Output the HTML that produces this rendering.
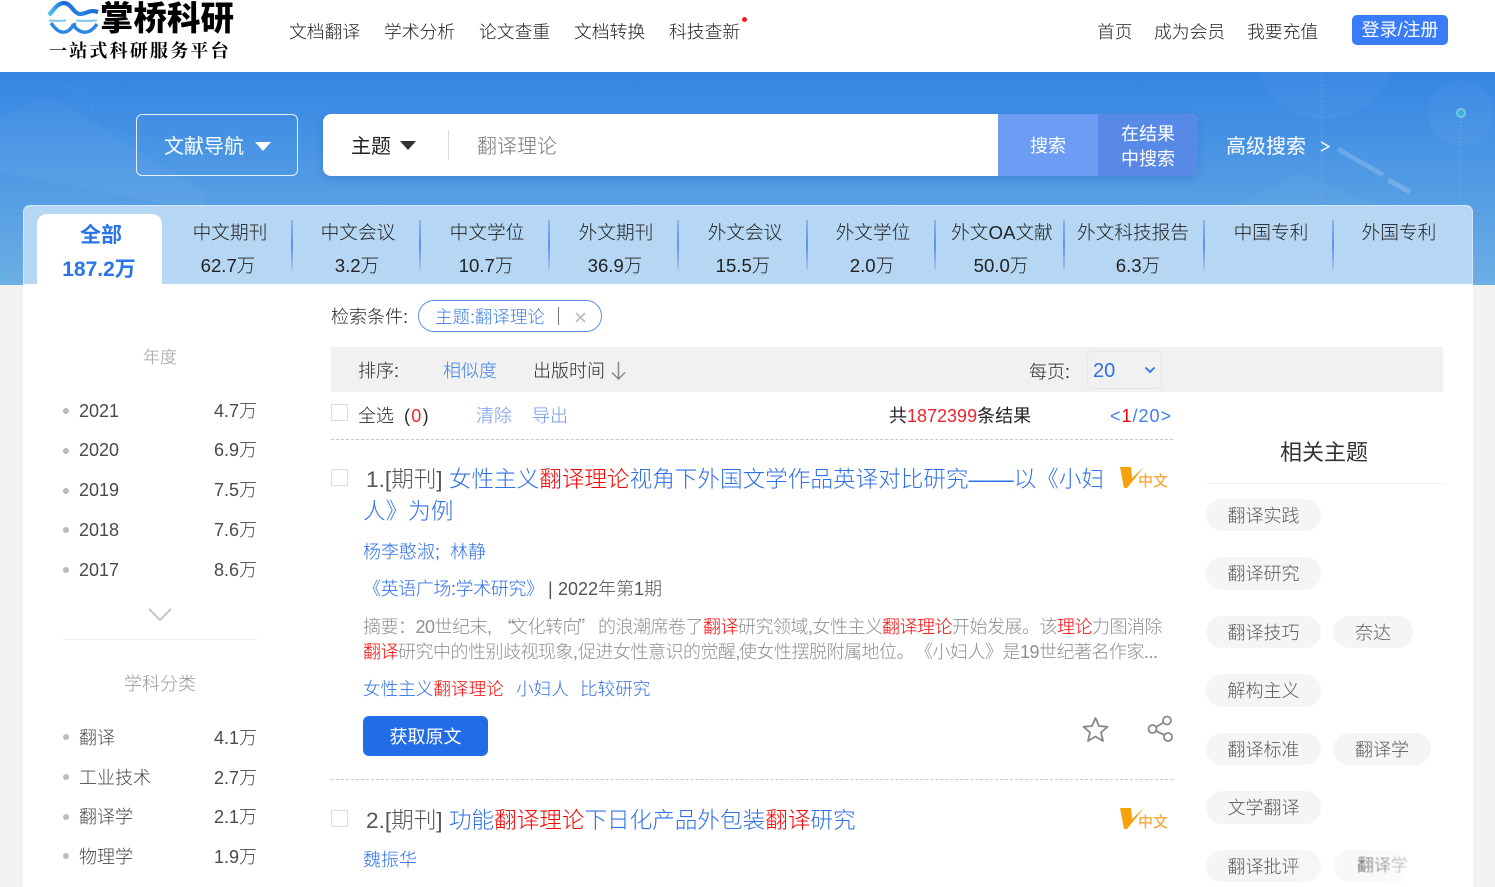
<!DOCTYPE html>
<html lang="zh"><head><meta charset="utf-8"><title>掌桥科研</title>
<style>
*{box-sizing:border-box;margin:0;padding:0}
html,body{width:1495px;height:887px;overflow:hidden;background:#f2f2f2}
body{position:relative;font-family:"Liberation Sans","Noto Sans CJK SC",sans-serif;color:#2a2a2a;font-weight:300}
.a{position:absolute}
.t{position:absolute;white-space:nowrap;line-height:1.3}
.c{transform:translateX(-50%)}
.r{color:#f00}.b{color:#2f6fe8}
.tag{position:absolute;height:32px;border-radius:16px;background:#f5f5f5;color:#5a5a5a;font-size:18px;line-height:34px;text-align:center}
.dot{position:absolute;left:63px;width:6px;height:6px;border-radius:50%;background:#bbb}
.sep{position:absolute;top:220px;width:2px;height:50px;background:linear-gradient(#8fb3f0,#5e8ff0 50%,#a6c4f0)}
.cb{position:absolute;left:331px;width:17px;height:17px;border:1px solid #ddd;background:#fff}
.tb{font-size:18.7px;top:221px;color:#222}.tn{font-size:18.6px;top:254px;color:#222}
.ab{position:absolute;white-space:nowrap;font-size:18px;line-height:25px;color:#8f8f8f;letter-spacing:-.5px}
.kw{font-size:17.6px;top:678px;color:#2f6fe8}
.nv{font-size:17.8px;top:21px;color:#222}
.s{font-size:18px;color:#4a4a4a}
</style></head><body>
<div class="a" style="left:0;top:0;width:1495px;height:72px;background:#fff"></div>
<svg class="a" style="left:46px;top:0" width="54" height="36" viewBox="0 0 54 36" fill="none">
<defs><linearGradient id="g1" x1="0" x2="1" y1="0" y2="0"><stop offset="0" stop-color="#4cc6ee"/><stop offset=".3" stop-color="#1668d8"/><stop offset=".65" stop-color="#2a86e0"/><stop offset="1" stop-color="#1668d8"/></linearGradient></defs>
<path d="M3 15C8 9 12 3 18 3C25 3 28 14 34 14C41 14 43 9 52 12" stroke="url(#g1)" stroke-width="4.200"/>
<path d="M3 20.500C10 21 14 21 20 20.500M30 20.500C38 21 44 21 51 20.500" stroke="#7cc6ee" stroke-width="2"/>
<path d="M5 23C10 30 14 33 19 32C25 31 26 25 30 24" stroke="#2e86e4" stroke-width="3.400"/>
<path d="M26 24C31 30 35 33 41 32C46 31 49 27 51 24" stroke="#2e86e4" stroke-width="3.400"/>
</svg>
<span class="t" style="left:100px;top:-2px;font-size:33.5px;font-weight:900;color:#000;line-height:44px">掌桥科研</span>
<span class="t" style="left:49px;top:39px;font-size:18px;font-weight:700;color:#000;letter-spacing:2.2px;line-height:22px;font-family:'Noto Serif CJK SC',serif">一站式科研服务平台</span>
<span class="t nv" style="left:289px">文档翻译</span>
<span class="t nv" style="left:384px">学术分析</span>
<span class="t nv" style="left:479px">论文查重</span>
<span class="t nv" style="left:574px">文档转换</span>
<span class="t nv" style="left:669px">科技查新</span>
<div class="a" style="left:742px;top:17px;width:5px;height:5px;border-radius:50%;background:#f01c1c"></div>
<span class="t nv" style="left:1097px">首页</span>
<span class="t nv" style="left:1154px">成为会员</span>
<span class="t nv" style="left:1247px">我要充值</span>
<div class="a" style="left:1352px;top:15px;width:96px;height:30px;border-radius:5px;background:#3a7cf7;color:#fff;font-size:18px;line-height:30px;text-align:center;font-weight:400">登录/注册</div>

<div class="a" style="left:0;top:72px;width:1495px;height:213px;background:linear-gradient(#3585e3,#6cafe5)"></div>
<svg class="a" style="left:0;top:72px" width="1495" height="213" fill="none">
<path d="M0 45L48 23L205 120V140L0 100Z" fill="#fff" opacity=".04"/>
<path d="M0 145L50 150L58 170L115 162L150 205" stroke="#4fb5d8" stroke-width="1.500" opacity=".3"/>
<path d="M60 0L65 15L85 20L100 55L150 70" stroke="#fff" opacity=".05"/>
<circle cx="5" cy="205" r="3" stroke="#4fc0d0" stroke-width="2" opacity=".5"/>
<circle cx="1325" cy="-25" r="72" fill="#fff" opacity=".04"/>
<circle cx="1461" cy="41" r="33" fill="#fff" opacity=".04"/>
<circle cx="1461" cy="41" r="4" fill="#2fb2d8" stroke="#7fc3e8" stroke-width="2"/>
<path d="M1338 77L1383 103M1388 108L1410 120" stroke="#fff" stroke-width="5" opacity=".18"/>
<path d="M1322 0V135M1461 45V135" stroke="#fff" stroke-width="2" stroke-dasharray="2 2" opacity=".08"/>
<path d="M1240 130L1300 100L1473 175V213H1240Z" fill="#fff" opacity=".03"/>
</svg>

<div class="a" style="left:136px;top:114px;width:162px;height:62px;border:1px solid #e6f0fb;border-radius:6px"></div>
<span class="t" style="left:164px;top:134px;font-size:20px;color:#fff;font-weight:400">文献导航</span>
<div class="a" style="left:255px;top:142px;border:8px solid transparent;border-top:9px solid #fff;border-bottom:0"></div>
<div class="a" style="left:323px;top:114px;width:875px;height:62px;background:#fff;border-radius:8px;box-shadow:0 3px 8px rgba(30,80,160,.25);overflow:hidden">
<div class="a" style="left:675px;top:0;width:100px;height:62px;background:#6c9cf4"></div>
<div class="a" style="left:775px;top:0;width:100px;height:62px;background:#5889e6"></div>
</div>
<span class="t" style="left:351px;top:134px;font-size:20px;color:#222;font-weight:400">主题</span>
<div class="a" style="left:400px;top:141px;border:8px solid transparent;border-top:9px solid #333;border-bottom:0"></div>
<div class="a" style="left:448px;top:130px;width:1px;height:30px;background:#ddd"></div>
<span class="t" style="left:477px;top:134px;font-size:20px;color:#777">翻译理论</span>
<span class="t c" style="left:1048px;top:133px;font-size:18px;line-height:26px;color:#fff;font-weight:400">搜索</span>
<div class="t" style="left:1098px;top:122px;width:100px;font-size:18px;line-height:25px;color:#fff;text-align:center;font-weight:400;white-space:normal">在结果<br>中搜索</div>
<span class="t" style="left:1226px;top:134px;font-size:20px;color:#fff;font-weight:400">高级搜索</span>
<svg class="a" style="left:1319px;top:140px" width="12" height="13" fill="none"><path d="M2 2L10 6.500L2 11" stroke="#fff" stroke-width="1.400"/></svg>

<div class="a" style="left:23px;top:284px;width:1450px;height:603px;background:#fff"></div>
<div class="a" style="left:23px;top:205px;width:1450px;height:79px;background:#b6d7f3;border:1px solid #d6e8f8;border-bottom:0;border-radius:7px 7px 0 0"></div>
<div class="a" style="left:37px;top:214px;width:125px;height:71px;background:#fff;border-radius:10px 10px 0 0"></div>
<span class="t c" style="left:101px;top:222px;font-size:21px;color:#2a75ea;font-weight:700">全部</span>
<span class="t c" style="left:99px;top:256px;font-size:21px;color:#2a75ea;font-weight:700">187.2万</span>
<div class="sep" style="left:291px"></div><div class="sep" style="left:419px"></div><div class="sep" style="left:548px"></div><div class="sep" style="left:677px"></div><div class="sep" style="left:806px"></div><div class="sep" style="left:934px"></div><div class="sep" style="left:1063px"></div><div class="sep" style="left:1203px"></div><div class="sep" style="left:1332px"></div>
<span class="t c tb" style="left:230px">中文期刊</span><span class="t c tn" style="left:228px">62.7万</span>
<span class="t c tb" style="left:358px">中文会议</span><span class="t c tn" style="left:357px">3.2万</span>
<span class="t c tb" style="left:487px">中文学位</span><span class="t c tn" style="left:486px">10.7万</span>
<span class="t c tb" style="left:616px">外文期刊</span><span class="t c tn" style="left:615px">36.9万</span>
<span class="t c tb" style="left:745px">外文会议</span><span class="t c tn" style="left:743px">15.5万</span>
<span class="t c tb" style="left:873px">外文学位</span><span class="t c tn" style="left:872px">2.0万</span>
<span class="t c tb" style="left:1002px">外文OA文献</span><span class="t c tn" style="left:1001px">50.0万</span>
<span class="t c tb" style="left:1133px">外文科技报告</span><span class="t c tn" style="left:1138px">6.3万</span>
<span class="t c tb" style="left:1271px">中国专利</span>
<span class="t c tb" style="left:1399px">外国专利</span>

<span class="t c" style="left:160px;top:347px;font-size:17px;color:#999">年度</span>
<div class="dot" style="top:408px"></div><span class="t s" style="left:79px;top:400px">2021</span><span class="t s" style="right:1238px;top:400px">4.7万</span>
<div class="dot" style="top:448px"></div><span class="t s" style="left:79px;top:439px">2020</span><span class="t s" style="right:1238px;top:439px">6.9万</span>
<div class="dot" style="top:488px"></div><span class="t s" style="left:79px;top:479px">2019</span><span class="t s" style="right:1238px;top:479px">7.5万</span>
<div class="dot" style="top:527px"></div><span class="t s" style="left:79px;top:519px">2018</span><span class="t s" style="right:1238px;top:519px">7.6万</span>
<div class="dot" style="top:567px"></div><span class="t s" style="left:79px;top:559px">2017</span><span class="t s" style="right:1238px;top:559px">8.6万</span>
<svg class="a" style="left:147px;top:607px" width="26" height="16" fill="none"><path d="M2 2L13 13L24 2" stroke="#bbb" stroke-width="1.600"/></svg>
<div class="a" style="left:63px;top:639px;width:194px;height:1px;background:#eee"></div>
<span class="t c" style="left:160px;top:673px;font-size:18px;color:#999">学科分类</span>
<div class="dot" style="top:734px"></div><span class="t s" style="left:79px;top:727px">翻译</span><span class="t s" style="right:1238px;top:727px">4.1万</span>
<div class="dot" style="top:774px"></div><span class="t s" style="left:79px;top:767px">工业技术</span><span class="t s" style="right:1238px;top:767px">2.7万</span>
<div class="dot" style="top:814px"></div><span class="t s" style="left:79px;top:806px">翻译学</span><span class="t s" style="right:1238px;top:806px">2.1万</span>
<div class="dot" style="top:853px"></div><span class="t s" style="left:79px;top:846px">物理学</span><span class="t s" style="right:1238px;top:846px">1.9万</span>

<span class="t" style="left:331px;top:306px;font-size:18px">检索条件:</span>
<div class="a" style="left:418px;top:300px;width:184px;height:32px;border:1px solid #5b93ea;border-radius:16px"></div>
<span class="t" style="left:435px;top:306px;font-size:17.5px;color:#3f7fe8">主题:翻译理论</span>
<div class="a" style="left:558px;top:307px;width:1px;height:18px;background:#777"></div>
<svg class="a" style="left:574px;top:311px" width="13" height="13" fill="none"><path d="M2 2L11 11M11 2L2 11" stroke="#bbb" stroke-width="1.600"/></svg>

<div class="a" style="left:331px;top:347px;width:1112px;height:45px;background:#f1f1f1"></div>
<span class="t" style="left:358px;top:360px;font-size:18px">排序:</span>
<span class="t" style="left:443px;top:360px;font-size:18px;color:#3f7fe8">相似度</span>
<span class="t" style="left:533px;top:360px;font-size:18px">出版时间</span>
<svg class="a" style="left:610px;top:361px" width="17" height="20" fill="none"><path d="M8.500 1V18M2 11.500L8.500 18L15 11.500" stroke="#888" stroke-width="1.500"/></svg>
<span class="t" style="left:1029px;top:361px;font-size:18px">每页:</span>
<div class="a" style="left:1087px;top:351px;width:75px;height:38px;border:1px solid #e6e6e6;border-radius:5px"></div>
<span class="t" style="left:1093px;top:358px;font-size:20px;color:#2f6fe8">20</span>
<svg class="a" style="left:1144px;top:366px" width="12" height="9" fill="none"><path d="M1.500 1.500L6 6L10.500 1.500" stroke="#2f6fe8" stroke-width="1.800"/></svg>

<div class="cb" style="top:404px"></div>
<span class="t" style="left:358px;top:405px;font-size:18px">全选</span>
<span class="t" style="left:404px;top:405px;font-size:18px;letter-spacing:1.300px">(<span style="color:#f4222d">0</span>)</span>
<span class="t" style="left:476px;top:405px;font-size:18px;color:#6c97ea">清除</span>
<span class="t" style="left:532px;top:405px;font-size:18px;color:#6c97ea">导出</span>
<span class="t" style="left:889px;top:405px;font-size:18px;color:#222;font-weight:400">共<span style="color:#f4222d;font-weight:300">1872399</span>条结果</span>
<span class="t" style="left:1110px;top:405px;font-size:18px;color:#3f7fe8;letter-spacing:1px">&lt;<span class="r">1</span>/20&gt;</span>
<div class="a" style="left:331px;top:439px;width:842px;height:0;border-top:1px dashed #c8c8c8"></div>

<div class="cb" style="top:469px"></div>
<div class="t" style="left:363px;top:464px;width:750px;white-space:normal;font-size:22.6px;line-height:32px;color:#2f6fe8;text-indent:3px"><span style="color:#555">1.[期刊]</span> 女性主义<span class="r">翻译理论</span>视角下外国文学作品英译对比研究——以《小妇人》为例</div>
<svg class="a" style="left:1120px;top:464px" width="52" height="26"><path d="M0 3H11L12 14L24 3L7 24H4Z" fill="#f7a10b"/><text x="18" y="22" font-size="15" fill="#f9a93a" style="font-family:'Noto Sans CJK SC',sans-serif;font-weight:500">中文</text></svg>
<span class="t" style="left:363px;top:541px;font-size:18px;color:#2f6fe8">杨李憨淑;&nbsp;&nbsp;林静</span>
<span class="t" style="left:363px;top:578px;font-size:18px;color:#2f6fe8;letter-spacing:-.4px">《英语广场:学术研究》</span>
<span class="t" style="left:548px;top:578px;font-size:18px;color:#555">|</span>
<span class="t" style="left:558px;top:578px;font-size:18px;color:#555">2022年第1期</span>

<span class="ab" style="left:363px;top:615px">摘要：20世纪末,</span>
<span class="ab" style="left:497px;top:615px;font-family:'Noto Sans CJK SC',sans-serif;letter-spacing:0" >“</span>
<span class="ab" style="left:510px;top:615px">文化转向</span>
<span class="ab" style="left:578px;top:615px;font-family:'Noto Sans CJK SC',sans-serif;letter-spacing:0">”</span>
<span class="ab" style="left:598px;top:615px">的浪潮席卷了</span>
<span class="ab r" style="left:703px;top:615px;color:#f00">翻译</span>
<span class="ab" style="left:738px;top:615px">研究领域,女性主义</span>
<span class="ab" style="left:882px;top:615px;color:#f00">翻译理论</span>
<span class="ab" style="left:952px;top:615px">开始发展。该</span>
<span class="ab" style="left:1057px;top:615px;color:#f00">理论</span>
<span class="ab" style="left:1092px;top:615px">力图消除</span>
<span class="ab" style="left:363px;top:640px;color:#f00">翻译</span>
<span class="ab" style="left:398px;top:640px">研究中的性别歧视现象,</span>
<span class="ab" style="left:578px;top:640px">促进女性意识的觉醒,</span>
<span class="ab" style="left:739px;top:640px">使女性摆脱附属地位。</span>
<span class="ab" style="left:915px;top:640px">《小妇人》是19世纪著名作家...</span>

<span class="t kw" style="left:363px">女性主义<span class="r">翻译理论</span></span>
<span class="t kw" style="left:516px">小妇人</span>
<span class="t kw" style="left:580px">比较研究</span>
<div class="a" style="left:363px;top:716px;width:125px;height:40px;border-radius:6px;background:#236ce8;color:#fff;font-size:18px;line-height:42px;text-align:center;font-weight:400">获取原文</div>
<svg class="a" style="left:1082px;top:716px" width="28" height="26" fill="none"><path d="M13.500 2L17 10L25.500 10.800L19 16.500L21 25L13.500 20.500L6 25L8 16.500L1.500 10.800L10 10Z" stroke="#888" stroke-width="1.800" stroke-linejoin="round"/></svg>
<svg class="a" style="left:1147px;top:715px" width="27" height="27" fill="none" stroke="#888" stroke-width="1.800"><circle cx="20" cy="5.500" r="4"/><circle cx="5.500" cy="14" r="4"/><circle cx="21" cy="22" r="4"/><path d="M9 12L16.500 7.500M9 16L17.500 20"/></svg>
<div class="a" style="left:331px;top:779px;width:842px;height:0;border-top:1px dashed #c8c8c8"></div>

<div class="cb" style="top:810px"></div>
<span class="t" style="left:366px;top:805px;font-size:22.6px;line-height:32px;color:#2f6fe8"><span style="color:#555">2.[期刊]</span> 功能<span class="r">翻译理论</span>下日化产品外包装<span class="r">翻译</span>研究</span>
<svg class="a" style="left:1120px;top:805px" width="52" height="26"><path d="M0 3H11L12 14L24 3L7 24H4Z" fill="#f7a10b"/><text x="18" y="22" font-size="15" fill="#f9a93a" style="font-family:'Noto Sans CJK SC',sans-serif;font-weight:500">中文</text></svg>
<span class="t" style="left:363px;top:849px;font-size:18px;color:#2f6fe8">魏振华</span>

<span class="t c" style="left:1324px;top:437px;font-size:22px;line-height:32px;color:#333;font-weight:400">相关主题</span>
<div class="a" style="left:1206px;top:483px;width:237px;height:1px;background:#eee"></div>
<div class="tag" style="left:1206px;top:499px;width:115px">翻译实践</div>
<div class="tag" style="left:1206px;top:557px;width:115px;height:33px">翻译研究</div>
<div class="tag" style="left:1206px;top:616px;width:115px">翻译技巧</div>
<div class="tag" style="left:1333px;top:616px;width:80px">奈达</div>
<div class="tag" style="left:1206px;top:674px;width:115px;height:33px">解构主义</div>
<div class="tag" style="left:1206px;top:733px;width:115px">翻译标准</div>
<div class="tag" style="left:1333px;top:733px;width:98px">翻译学</div>
<div class="tag" style="left:1206px;top:791px;width:115px;height:33px">文学翻译</div>
<div class="tag" style="left:1206px;top:850px;width:115px">翻译批评</div>
<div class="a" style="left:1334px;top:850px;width:72px;height:32px;border-radius:16px 0 0 16px;background:#f7f7f7"></div>
<span class="t" style="left:1357px;top:855px;font-size:17px;color:#333;filter:blur(.4px)">翻译学</span>
<div class="a" style="left:1288px;top:850px;width:130px;height:37px;background:linear-gradient(90deg,rgba(255,255,255,0),rgba(255,255,255,.15) 15%,rgba(255,255,255,.05) 50%,rgba(255,255,255,.8))"></div>
</body></html>
